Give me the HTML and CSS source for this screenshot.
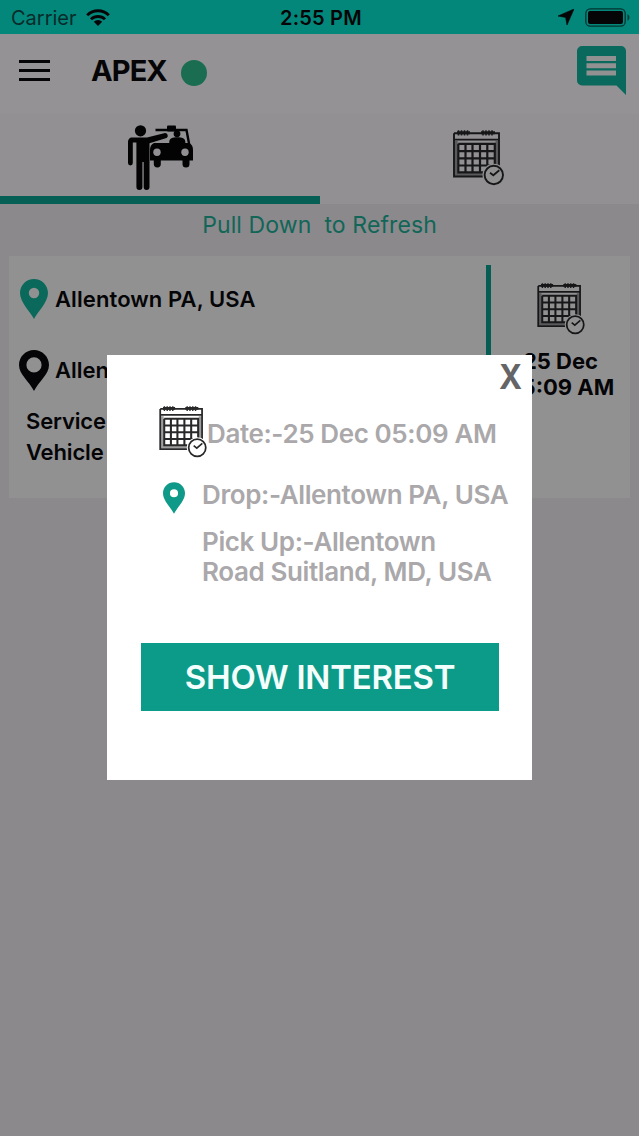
FILE: index.html
```html
<!DOCTYPE html>
<html lang="en">
<head>
<meta charset="utf-8">
<title>APEX</title>
<link rel="stylesheet" href="styles.css">
</head>
<body>
<svg class="defs" aria-hidden="true">
  <symbol id="calendar" viewBox="0 0 51 57">
    <path d="M1 4.200h45v35M37 47.500H1V4.200" fill="none" stroke="currentColor" stroke-width="1.900"/>
    <path d="M1 10.700h45" stroke="currentColor" stroke-width="1.800"/>
    <path d="M4 3.700h13M28 3.700h14" stroke="currentColor" stroke-width="3"/>
    <path d="M5.500 1.300v5.200M8.500 1.300v5.200M11.500 1.300v5.200M14.500 1.300v5.200M30 1.300v5.200M33 1.300v5.200M36 1.300v5.200M39 1.300v5.200" stroke="currentColor" stroke-width="1.500"/>
    <path d="M3.200 12v33.400H33M44 12v26" fill="none" stroke="currentColor" stroke-width="3" opacity=".45"/>
    <path d="M5.300 14.800h36.500v22M35 43.300H5.300V14.800M12.500 14.800v28.500M19.500 14.800v28.500M27 14.800v28.500M34.300 14.800v25M5.300 22.100h36.500M5.300 29.300h36.500M5.300 36.500h32" fill="none" stroke="currentColor" stroke-width="2.200"/>
    <circle cx="40.800" cy="46" r="11.300" fill="var(--surface)"/>
    <circle cx="40.800" cy="46" r="9.200" fill="none" stroke="currentColor" stroke-width="1.900"/>
    <path d="M37 43.700l3.300 2.600 6-5" fill="none" stroke="currentColor" stroke-width="1.800"/>
  </symbol>
  <symbol id="pin" viewBox="0 0 28 40">
    <path fill-rule="evenodd" d="M14 0C6.300 0 0 6.200 0 14c0 9.500 10.500 19 14 26 3.500-7 14-16.500 14-26C28 6.200 21.700 0 14 0zm0 8.800a5.200 5.200 0 1 1 0 10.400A5.200 5.200 0 0 1 14 8.800z" fill="currentColor"/>
  </symbol>
  <symbol id="pin-ring" viewBox="0 0 30 41">
    <path fill-rule="evenodd" d="M15 0C6.700 0 0 6.700 0 15c0 9.500 10 16 15 26 5-10 15-16.500 15-26C30 6.700 23.300 0 15 0zm0 7.300a7.600 7.600 0 1 1 0 15.200 7.600 7.600 0 0 1 0-15.200z" fill="currentColor"/>
  </symbol>
</svg>

<div class="screen">
  <div class="status">
    <span class="carrier">Carrier</span>
    <svg class="wifi" viewBox="0 0 24 17"><g fill="none" stroke="currentColor" stroke-width="2.900"><path d="M1.200 6.200a15.300 15.300 0 0 1 21.600 0"/><path d="M5 10.300a10 10 0 0 1 14 0"/></g><path d="M12 17l-4.200-4.200a6 6 0 0 1 8.400 0z" fill="currentColor"/></svg>
    <span class="clock">2:55 PM</span>
    <svg class="location" viewBox="0 0 16 16"><path d="M16 0L9 16 7.600 8.400 0 7z" fill="currentColor" stroke="currentColor" stroke-width=".6"/></svg>
    <svg class="battery" viewBox="0 0 46 19"><rect x=".8" y=".8" width="39.400" height="17.400" rx="4.500" fill="none" stroke="currentColor" stroke-width="1.300" opacity=".65"/><rect x="3" y="3" width="35" height="13" rx="2" fill="currentColor"/><path d="M42.500 6.300c2.600 1 2.600 5.400 0 6.400z" fill="currentColor" opacity=".6"/></svg>
  </div>

  <header class="header">
    <svg class="menu" viewBox="0 0 31 21"><path d="M0 1.500h31M0 10.500h31M0 19.500h31" stroke="currentColor" stroke-width="2.900"/></svg>
    <h1 class="brand">APEX</h1>
    <span class="online"></span>
    <svg class="chat" viewBox="0 0 49 49"><path d="M5 0h39a5 5 0 0 1 5 5v44L39.500 39.500H5a5 5 0 0 1-5-5V5a5 5 0 0 1 5-5z" fill="currentColor"/><path d="M9.500 12.500h29.500M9.500 19.700h29.500M9.500 27h29.500" stroke="#929192" stroke-width="5"/></svg>
  </header>

  <nav class="tabs">
    <div class="tab tab-active">
      <svg class="hail" viewBox="0 0 66 65">
        <path d="M28.500 5H59.500L62.500 21" fill="none" stroke="currentColor" stroke-width="2.400"/>
        <path d="M39 8l3 2.500-2 4.500-13 4z" fill="#929092"/>
        <g fill="currentColor">
          <circle cx="13.500" cy="5.800" r="5.600"/>
          <path d="M5.500 12.500H20L38 8a2.700 2.700 0 0 1 1.500 5L22.500 18.200V62a2.900 2.900 0 0 1-5.800 0V37h-1.300v25a3 3 0 0 1-6 0V17.500H5.800V38a2.400 2.400 0 0 1-4.800 0V18c0-3.600 1.200-5.500 4.500-5.500z"/>
          <rect x="40" y=".5" width="9" height="6" rx="1"/>
          <circle cx="50" cy="8.800" r="3.400"/>
          <path d="M42.300 19v-2.500c.3-3 3-4.300 8-4.300s7.700 1.300 8 4.300V19z"/>
          <path d="M27 18h35c3 1.500 4 3.500 4 7v10.500h-3.500V39a3.500 3.500 0 0 1-7 0v-3.500H33.800V39a3.500 3.500 0 0 1-7 0v-3.500H23V25c0-3.500 1-5.500 4-7z"/>
        </g>
        <circle cx="30" cy="27.300" r="3.700" fill="#929092"/><circle cx="58" cy="27.300" r="3.700" fill="#929092"/>
      </svg>
    </div>
    <div class="tab"><svg class="calendar-large"><use href="#calendar"/></svg></div>
  </nav>

  <p class="refresh">Pull Down&nbsp; to Refresh</p>

  <article class="card">
    <div class="trip">
      <div class="place drop"><svg class="pin"><use href="#pin"/></svg><span>Allentown PA, USA</span></div>
      <div class="place pickup"><svg class="pin-ring"><use href="#pin-ring"/></svg><span>Allentown</span></div>
      <p class="detail">Service</p>
      <p class="detail">Vehicle</p>
    </div>
    <div class="divider"></div>
    <div class="when">
      <svg class="calendar-small"><use href="#calendar"/></svg>
      <p class="when-text">25 Dec<br>05:09 AM</p>
    </div>
  </article>

  <section class="modal">
    <button class="close"><span>X</span></button>
    <div class="row row-date"><svg class="calendar-small"><use href="#calendar"/></svg><span>Date:-25 Dec 05:09 AM</span></div>
    <div class="row row-drop"><svg class="pin-small"><use href="#pin"/></svg><span>Drop:-Allentown PA, USA</span></div>
    <p class="row-pickup">Pick Up:-Allentown<br>Road Suitland, MD, USA</p>
    <button class="interest">SHOW INTEREST</button>
  </section>
</div>
</body>
</html>
```
FILE: styles.css
```css
* { box-sizing: border-box; }
body, p, h1 { margin: 0; }
body { font-family: Inter, Roboto, sans-serif; background: #8b898c; }
svg { display: block; flex: none; }
button { border: 0; padding: 0; font-family: inherit; }
.defs { position: absolute; width: 0; height: 0; }

.screen {
  --surface: #929192;
  position: relative;
  width: 639px;
  height: 1136px;
  overflow: hidden;
  background: #8b898c;
  color: #050507;
  white-space: nowrap;
}

.status {
  display: grid;
  grid-template-columns: 75px 194px 278px 27px 46px;
  align-items: center;
  height: 34px;
  padding-left: 11px;
  background: #03877b;
}
.carrier { padding-top: 1px; font-size: 20px; color: #082b2a; }
.wifi { width: 24px; height: 17px; }
.clock { padding-top: 1px; font-size: 20px; font-weight: 600; letter-spacing: .2px; }
.location { width: 16px; height: 16px; }
.battery { width: 46px; height: 19px; }

.header {
  display: flex;
  align-items: flex-start;
  height: 80px;
  padding: 12px 13px 0 19px;
  background: #949294;
}
.menu { width: 31px; height: 21px; margin-top: 14px; }
.brand { width: 93px; margin-left: 41px; font-size: 29px; line-height: 35px; margin-top: 7px; font-weight: 700; letter-spacing: -.9px; }
.online { width: 26px; height: 26px; margin: 14px 0 0 -3px; border-radius: 50%; background: #1a6d51; }
.chat { width: 49px; height: 49px; margin-left: auto; color: #09695d; }

.tabs { display: grid; grid-template-columns: 320px 319px; height: 90px; background: #929092; }
.tab { display: flex; border-bottom: 8px solid transparent; }
.tab-active { border-color: #055f54; }
.hail { width: 66px; height: 65px; margin: 11px 0 0 127px; color: #030304; }
.calendar-large { width: 51px; height: 57px; margin: 15px 0 0 133px; color: #171719; }

.refresh { height: 52px; padding-top: 6px; text-align: center; font-size: 23px; line-height: 30px; letter-spacing: .1px; color: #116658; }

.card {
  display: grid;
  grid-template-columns: 477px 5px 1fr;
  height: 242px;
  margin: 0 9px;
  background: #929192;
}
.trip { padding: 22px 0 0 11px; font-size: 22px; font-weight: 600; }
.place { display: flex; align-items: center; height: 42px; }
.pin { width: 28px; height: 40px; color: #0a695b; margin-right: 7px; }
.drop { letter-spacing: .1px; }
.pickup { margin-top: 29px; }
.pin-ring { width: 30px; height: 41px; margin: 0 6px 0 -1px; }
.detail { padding-left: 6px; line-height: 31px; letter-spacing: -.15px; }
.pickup + .detail { margin-top: 15px; }
.divider { margin: 9px 0; background: #055d53; }
.when { display: flex; flex-direction: column; align-items: center; }
.when .calendar-small { margin: 26px 0 0 0; color: #171719; }
.calendar-small { width: 48px; height: 53px; }
.when-text { margin-top: 13px; font-size: 22px; line-height: 26px; font-weight: 700; text-align: center; }

.modal {
  --surface: #fff;
  position: absolute;
  top: 355px;
  left: 107px;
  width: 425px;
  height: 425px;
  padding-top: 3px;
  display: flex;
  flex-direction: column;
  background: #fff;
  color: #aaa8aa;
  font-size: 26px;
  font-weight: 600;
  letter-spacing: -.39px;
}
.close { align-self: flex-end; margin-right: 9px; background: none; color: #656466; font-size: 34px; font-weight: 700; line-height: 38px; }
.close span { display: block; transform: scaleX(.92); }
.row { display: flex; }
.row-date { margin: 9px 0 0 52px; height: 53px; align-items: center; }
.row-date svg { color: #28282a; }
.row-date span { margin-top: 4px; }
.row-drop { margin: 20px 0 0 56px; height: 34px; align-items: center; }
.row-drop span { margin-top: -2px; }
.pin-small { width: 22px; height: 32px; margin: 6px 17px 0 0; color: #0e9988; }
.row-pickup { margin: 15px 0 0 95px; line-height: 30px; }
.interest { width: 358px; height: 68px; margin: 56px 0 0 34px; background: #0d9b89; color: #f4fffd; font-size: 33px; font-weight: 600; letter-spacing: -.25px; }
```
